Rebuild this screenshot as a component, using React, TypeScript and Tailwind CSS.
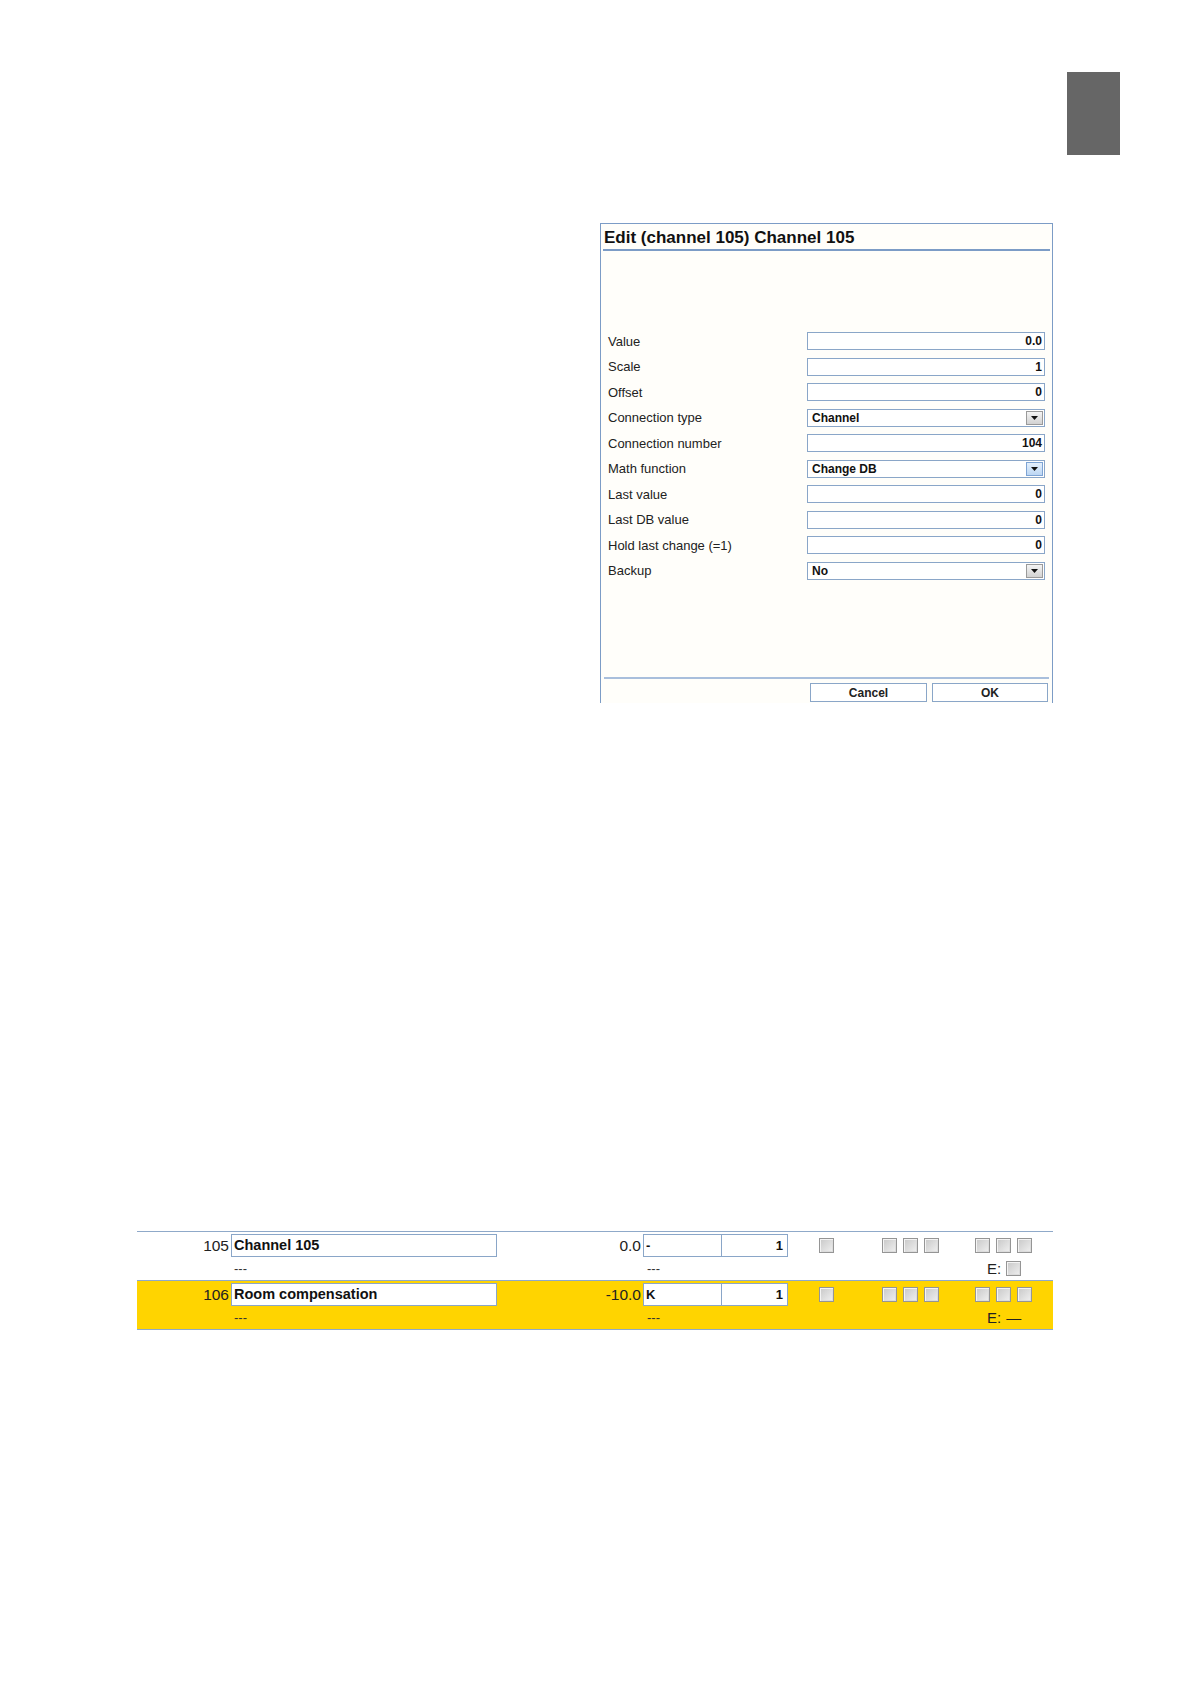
import React from "react";

const rows: { label: string; value: string; select?: boolean; active?: boolean }[] = [
  { label: "Value", value: "0.0" },
  { label: "Scale", value: "1" },
  { label: "Offset", value: "0" },
  { label: "Connection type", value: "Channel", select: true },
  { label: "Connection number", value: "104" },
  { label: "Math function", value: "Change DB", select: true, active: true },
  { label: "Last value", value: "0" },
  { label: "Last DB value", value: "0" },
  { label: "Hold last change (=1)", value: "0" },
  { label: "Backup", value: "No", select: true },
];

function Arrow({ active }: { active?: boolean }) {
  return (
    <span
      className={
        "absolute right-[1px] top-[1px] w-[17px] h-[14px] border flex items-center justify-center " +
        (active
          ? "border-[#7ea4d4] bg-linear-to-b from-[#e4f0fc] to-[#bcd6f3]"
          : "border-[#9a9a9a] bg-linear-to-b from-[#f4f4f4] to-[#d2d2d2]")
      }
    >
      <svg width="7" height="4" viewBox="0 0 7 4">
        <path d="M0 0 L7 0 L3.5 4 Z" fill="#111" />
      </svg>
    </span>
  );
}

function Check() {
  return (
    <span className="inline-block w-[15px] h-[15px] border border-[#959595] bg-linear-to-br from-[#c8c8c8] to-[#f0f0f0] shadow-[inset_1px_1px_0_#f4f4f4,inset_-1px_-1px_0_#dcdcdc]" />
  );
}

function TableRow({
  num,
  name,
  value,
  unit,
  yellow,
  eCheck,
}: {
  num: string;
  name: string;
  value: string;
  unit: string;
  yellow?: boolean;
  eCheck?: boolean;
}) {
  return (
    <div className={"h-[49px] pt-[2px] border-b border-[#8fa9c9] " + (yellow ? "bg-[#ffd400]" : "bg-white")}>
      <div className="flex items-center h-[23px]">
        <div className="w-[94px] pr-[2px] text-right text-[15.5px] text-[#222] leading-none">{num}</div>
        <div className="w-[266px] h-[23px] border border-[#8aa6c8] bg-white flex items-center pl-[2px] text-[14.5px] font-bold text-[#111] leading-none">
          {name}
        </div>
        <div className="w-[146px] pr-[2px] text-right text-[15.5px] text-[#222] leading-none">{value}</div>
        <div className="w-[79px] h-[23px] border border-[#8aa6c8] bg-white flex items-center pl-[2px] text-[13px] font-bold text-[#111] leading-none">
          {unit}
        </div>
        <div className="w-[66px] h-[23px] border border-[#8aa6c8] border-l-0 bg-white flex items-center justify-end pr-[4px] text-[13px] font-bold text-[#111] leading-none">
          1
        </div>
        <div className="ml-[31px] flex">
          <Check />
        </div>
        <div className="ml-[48px] flex gap-[6px]">
          <Check />
          <Check />
          <Check />
        </div>
        <div className="ml-[36px] flex gap-[6px]">
          <Check />
          <Check />
          <Check />
        </div>
      </div>
      <div className="flex items-center h-[23px] text-[13px] text-[#333] leading-none">
        <div className="w-[97px]" />
        <div className="w-[413px]">---</div>
        <div className="w-[340px]">---</div>
        <div className="flex items-center gap-[5px] text-[15px] text-[#222]">
          <span>E:</span>
          {eCheck ? <Check /> : <span>—</span>}
        </div>
      </div>
    </div>
  );
}

export default function App() {
  return (
    <div className="w-[1191px] min-h-[1684px] bg-white font-['Liberation_Sans',Arial,sans-serif] text-[#1a1a1a]">
      <div className="flex justify-end pt-[72px] pr-[71px]">
        <div className="w-[53px] h-[83px] bg-[#666666]" />
      </div>

      <div className="ml-[600px] mt-[68px] w-[453px] h-[480px] border-t border-x border-[#7c9cc6] bg-[#fffefa] flex flex-col">
        <div className="mx-[2px] h-[27px] border-b-2 border-[#7c9cc6] flex items-center pl-[1px] pt-[1px]">
          <span className="text-[17px] font-bold text-[#111] leading-none">Edit (channel 105) Channel 105</span>
        </div>
        <div className="pt-[81px] pl-[7px]">
          {rows.map((r) => (
            <div key={r.label} className="h-[25.56px] flex items-start">
              <div className="w-[199px] h-[18px] flex items-center text-[13px] text-[#222] leading-none">{r.label}</div>
              <div
                className={
                  "relative w-[238px] h-[18px] border border-[#8aa6c8] bg-white flex items-center text-[12px] font-bold text-[#111] leading-none " +
                  (r.select ? "pl-[4px]" : "justify-end pr-[2px]")
                }
              >
                {r.value}
                {r.select && <Arrow active={r.active} />}
              </div>
            </div>
          ))}
        </div>
        <div className="flex-1" />
        <div className="mx-[3px] h-[2px] bg-[#a9bfdc]" />
        <div className="flex justify-end gap-[5px] pr-[4px] mt-[4px] mb-[1px]">
          <div className="w-[117px] h-[19px] border border-[#8aa6c8] bg-white flex items-center justify-center text-[12px] font-bold text-[#222] leading-none">
            Cancel
          </div>
          <div className="w-[116px] h-[19px] border border-[#8aa6c8] bg-white flex items-center justify-center text-[12px] font-bold text-[#222] leading-none">
            OK
          </div>
        </div>
      </div>

      <div className="ml-[137px] mt-[528px] w-[916px] border-t border-[#8fa9c9]">
        <TableRow num="105" name="Channel 105" value="0.0" unit="-" eCheck />
        <TableRow num="106" name="Room compensation" value="-10.0" unit="K" yellow />
      </div>
    </div>
  );
}
